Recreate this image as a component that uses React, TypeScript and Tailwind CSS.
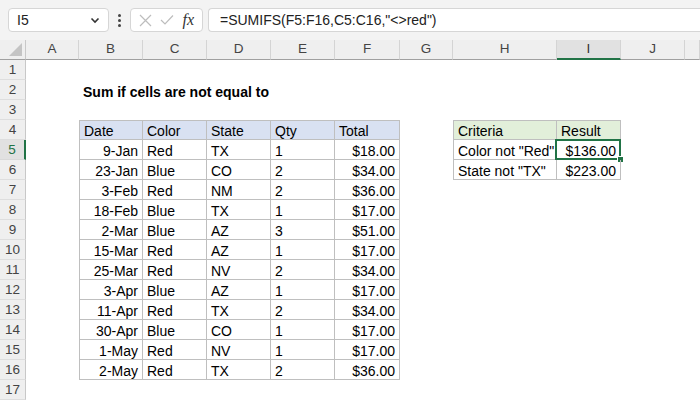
import React from "react";

const cols = ["A", "B", "C", "D", "E", "F", "G", "H", "I", "J", ""];

const data = [
    ["9-Jan", "Red", "TX", "1", "$18.00"],
    ["23-Jan", "Blue", "CO", "2", "$34.00"],
    ["3-Feb", "Red", "NM", "2", "$36.00"],
    ["18-Feb", "Blue", "TX", "1", "$17.00"],
    ["2-Mar", "Blue", "AZ", "3", "$51.00"],
    ["15-Mar", "Red", "AZ", "1", "$17.00"],
    ["25-Mar", "Red", "NV", "2", "$34.00"],
    ["3-Apr", "Blue", "AZ", "1", "$17.00"],
    ["11-Apr", "Red", "TX", "2", "$34.00"],
    ["30-Apr", "Blue", "CO", "1", "$17.00"],
    ["1-May", "Red", "NV", "1", "$17.00"],
    ["2-May", "Red", "TX", "2", "$36.00"],
];

const tb = "border-[#bfbfbf]";

function Cell({ children, className = "" }: { children?: React.ReactNode, className?: string }) {
    return (
        <div className={`relative flex h-5 items-end overflow-visible whitespace-nowrap px-1 text-[14px] leading-[16px] text-black ${className}`}>
            {children}
        </div>
    );
}

function RowHead({ n, active }: { n: number, active?: boolean }) {
    return (
        <div className={`flex h-5 items-center justify-center border-b border-r pt-[2px] text-[13.5px] ${active ? "border-b-[#d9d9d9] border-r-2 border-r-[#217346] bg-[#e1e1e1] text-[#217346]" : "border-b-[#dedede] border-r-[#c8c8c8] bg-[#efefef] text-[#444]"}`}>
            {n}
        </div>
    );
}

function sheetRow(r: number) {
    const cells: React.ReactNode[] = [];
    cells.push(<RowHead key={"h" + r} n={r} active={r === 5} />);
    cells.push(<Cell key={"A" + r} />);
    if (r === 2) {
        cells.push(<Cell key={"B" + r} className="z-10 font-bold">Sum if cells are not equal to</Cell>);
        for (let i = 0; i < 7; i++) cells.push(<Cell key={"x" + r + i} />);
    } else if (r >= 4 && r <= 16) {
        const head = r === 4;
        const row = head ? ["Date", "Color", "State", "Qty", "Total"] : data[r - 5];
        row.forEach((v, i) => {
            const right = !head && (i === 0 || i === 4);
            cells.push(
                <Cell key={"t" + r + i} className={`border-b border-r ${tb} ${i === 0 ? "border-l" : ""} ${head ? "border-t bg-[#d9e1f2]" : ""} ${right ? "justify-end" : ""}`}>
                    {v}
                </Cell>
            );
        });
        cells.push(<Cell key={"G" + r} />);
        if (r <= 6) {
            const crit = [["Criteria", "Result"], ["Color not \"Red\"", "$136.00"], ["State not \"TX\"", "$223.00"]][r - 4];
            cells.push(
                <Cell key={"H" + r} className={`border-b border-l border-r ${tb} ${r === 4 ? "border-t bg-[#e2efda]" : ""}`}>{crit[0]}</Cell>
            );
            cells.push(
                <Cell key={"I" + r} className={`border-b border-r ${tb} ${r === 4 ? "border-t bg-[#e2efda]" : "justify-end"}`}>
                    {crit[1]}
                    {r === 5 && (
                        <>
                            <div className="pointer-events-none absolute -left-[2px] -top-[1px] bottom-[-1px] right-[-1px] border-2 border-[#217346]" />
                            <div className="absolute -bottom-[4px] -right-[4px] h-[7px] w-[7px] border border-white bg-[#217346]" />
                        </>
                    )}
                </Cell>
            );
        } else {
            cells.push(<Cell key={"H" + r} />);
            cells.push(<Cell key={"I" + r} />);
        }
    } else {
        for (let i = 0; i < 8; i++) cells.push(<Cell key={"e" + r + i} />);
    }
    cells.push(<Cell key={"J" + r} />);
    cells.push(<Cell key={"K" + r} />);
    return cells;
}

export default function App() {
    return (
        <div className="h-[400px] w-[700px] overflow-hidden bg-white" style={{ fontFamily: "'Liberation Sans', Arial, sans-serif" }}>
            {/* formula bar */}
            <div className="flex h-10 items-start bg-[#f3f3f3] pt-2">
                <div className="ml-2 flex h-6 w-[101px] items-center justify-between rounded border border-[#d6d6d6] bg-white pl-2 pr-2 text-[14px] text-[#222]">
                    <span>I5</span>
                    <svg width="10" height="10" viewBox="0 0 10 10"><path d="M1.5 3.5 L5 7 L8.5 3.5" fill="none" stroke="#333" strokeWidth="1.6" /></svg>
                </div>
                <div className="flex h-6 w-[21px] flex-col items-center justify-center gap-[2px]">
                    <span className="h-[3px] w-[3px] rounded-full bg-[#444]" />
                    <span className="h-[3px] w-[3px] rounded-full bg-[#444]" />
                    <span className="h-[3px] w-[3px] rounded-full bg-[#444]" />
                </div>
                <div className="flex h-6 w-[73px] items-center justify-between rounded border border-[#d6d6d6] bg-white px-[8px]">
                    <svg width="13" height="13" viewBox="0 0 13 13"><path d="M1 1 L12 12 M12 1 L1 12" stroke="#bdbdbd" strokeWidth="1.2" /></svg>
                    <svg width="14" height="12" viewBox="0 0 14 12"><path d="M1 6 L5 10 L13 1.5" fill="none" stroke="#bdbdbd" strokeWidth="1.2" /></svg>
                    <span className="text-[16px] italic text-[#333]" style={{ fontFamily: "'Liberation Serif', serif" }}>fx</span>
                </div>
                <div className="ml-[5px] flex h-6 flex-1 items-center rounded-l border border-r-0 border-[#d6d6d6] bg-white pl-[11px] text-[14px] text-[#222]">
                    =SUMIFS(F5:F16,C5:C16,"&lt;&gt;red")
                </div>
            </div>
            {/* sheet */}
            <div className="grid grid-cols-[26px_53px_64px_64px_64px_64px_65px_53px_104px_64px_64px_1fr]">
                <div className="relative h-5 border-b border-r border-b-[#a0a0a0] border-r-[#c8c8c8] bg-[#efefef]">
                    <div className="absolute bottom-[3px] right-[3px] h-0 w-0 border-b-[13px] border-l-[13px] border-b-[#c4c4c4] border-l-transparent" />
                </div>
                {cols.map((c) => (
                    <div key={c || "k"} className={`flex h-5 items-center justify-center border-r border-r-[#d4d4d4] text-[13.5px] ${c === "I" ? "border-b-2 border-b-[#217346] bg-[#e1e1e1] text-[#333]" : "border-b border-b-[#a0a0a0] bg-[#efefef] text-[#444]"}`}>
                        {c}
                    </div>
                ))}
                {Array.from({ length: 17 }, (_, i) => sheetRow(i + 1))}
            </div>
        </div>
    );
}
